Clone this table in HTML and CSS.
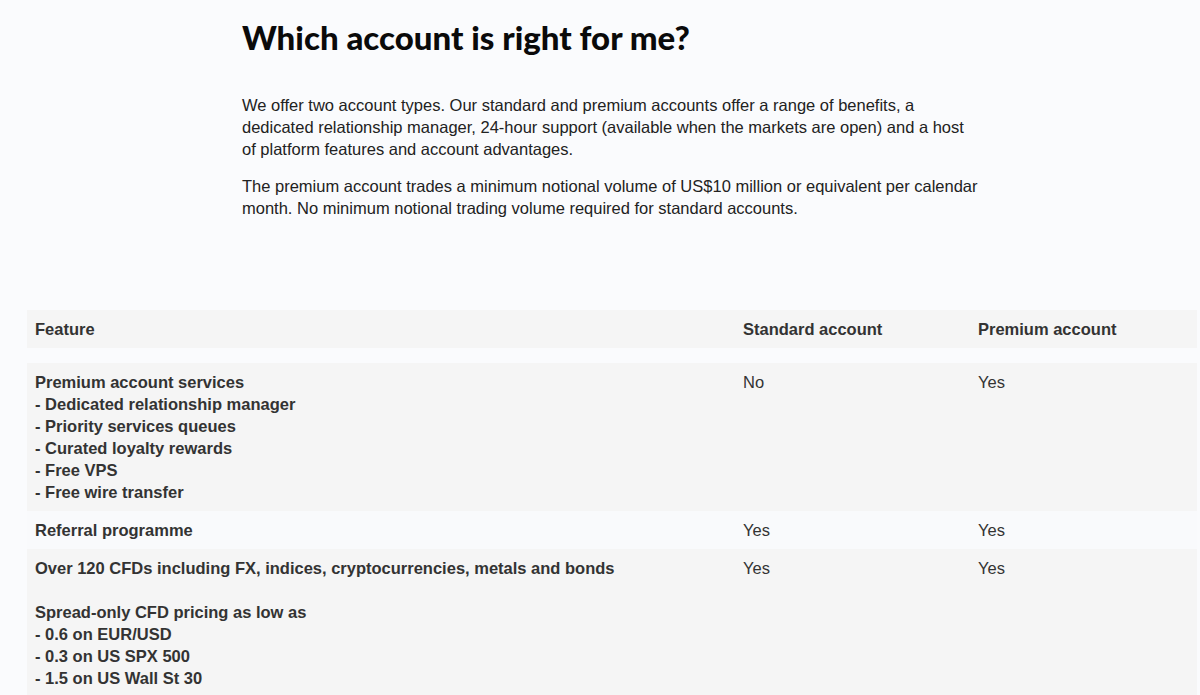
FILE: index.html
```html
<!DOCTYPE html>
<html lang="en">
<head>
    <meta charset="UTF-8">
    <meta name="viewport" content="width=device-width, initial-scale=1.0">
    <title>Which account is right for me?</title>
    <link rel="stylesheet" href="styles.css">
</head>
<body>
    <!-- intro -->
    <div class="intro">
        <h1>Which account is right for me?</h1>
        <p>We offer two account types. Our standard and premium accounts offer a range of benefits, a dedicated relationship manager, 24-hour support (available when the markets are open) and a host of platform features and account advantages.</p>
        <p>The premium account trades a minimum notional volume of US$10 million or equivalent per calendar month. No minimum notional trading volume required for standard accounts.</p>
    </div>

    <!-- comparison table -->
    <table class="compare">
        <thead>
            <tr>
                <th class="col-feature">Feature</th>
                <th class="col-std">Standard account</th>
                <th>Premium account</th>
            </tr>
        </thead>
        <tbody>
            <tr>
                <td class="feature">Premium account services<br>- Dedicated relationship manager<br>- Priority services queues<br>- Curated loyalty rewards<br>- Free VPS<br>- Free wire transfer</td>
                <td>No</td>
                <td>Yes</td>
            </tr>
            <tr>
                <td class="feature">Referral programme</td>
                <td>Yes</td>
                <td>Yes</td>
            </tr>
            <tr>
                <td class="feature">Over 120 CFDs including FX, indices, cryptocurrencies, metals and bonds<br><br>Spread-only CFD pricing as low as<br>- 0.6 on EUR/USD<br>- 0.3 on US SPX 500<br>- 1.5 on US Wall St 30</td>
                <td>Yes</td>
                <td>Yes</td>
            </tr>
        </tbody>
    </table>
</body>
</html>
```
FILE: styles.css
```css
body {
    margin: 0;
    padding: 0;
    background-color: #fafbfd;
    font-family: "Liberation Sans", Arial, sans-serif;
    color: #222;
}
.intro {
    width: 740px;
    margin-left: 242px;
    padding-top: 16px;
}
.intro h1 {
    margin: 0 0 36px;
    font-family: Lato, "Liberation Sans", sans-serif;
    font-weight: 900;
    font-size: 33px;
    line-height: 42px;
    color: #0a0a0a;
}
.intro p {
    margin: 0 0 15px;
    font-size: 16.5px;
    line-height: 22px;
}
.compare {
    margin: 91px 0 0 27px;
    width: 1170px;
    border-collapse: collapse;
    font-size: 16.5px;
    line-height: 22px;
    color: #333;
}
.compare th,
.compare td {
    padding: 8px;
    text-align: left;
    vertical-align: top;
}
.compare th {
    font-weight: bold;
}
.compare thead tr {
    background-color: #f5f5f5;
    border-bottom: 15px solid #fafbfd;
}
.col-feature {
    width: 692px;
}
.col-std {
    width: 219px;
}
.compare td.feature {
    font-weight: bold;
}
.compare tbody tr:nth-child(odd) {
    background-color: #f5f5f5;
}
.compare tbody tr:nth-child(even) {
    background-color: #f9fafc;
}
```
